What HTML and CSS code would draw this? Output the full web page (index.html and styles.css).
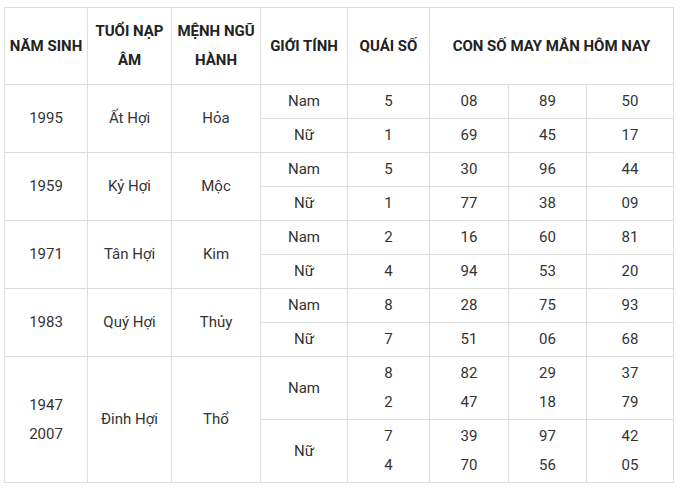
FILE: index.html
```html
<!DOCTYPE html>
<html lang="vi">
<head>
<meta charset="utf-8">
<link rel="stylesheet" href="styles.css">
</head>
<body>
<div class="wrap">
<table class="tbl">
<colgroup>
<col class="c1"><col class="c2"><col class="c3"><col class="c4"><col class="c5"><col class="c6"><col class="c7"><col class="c8">
</colgroup>
<thead>
<tr class="hrow">
<th>NĂM SINH</th><th>TUỔI NẠP ÂM</th><th>MỆNH NGŨ HÀNH</th><th>GIỚI TÍNH</th><th>QUÁI SỐ</th><th colspan="3">CON SỐ MAY MẮN HÔM NAY</th>
</tr>
</thead>
<tbody>
<tr class="r"><td rowspan="2">1995</td><td rowspan="2">Ất Hợi</td><td rowspan="2">Hỏa</td><td>Nam</td><td>5</td><td>08</td><td>89</td><td>50</td></tr>
<tr class="r"><td>Nữ</td><td>1</td><td>69</td><td>45</td><td>17</td></tr>
<tr class="r"><td rowspan="2">1959</td><td rowspan="2">Kỷ Hợi</td><td rowspan="2">Mộc</td><td>Nam</td><td>5</td><td>30</td><td>96</td><td>44</td></tr>
<tr class="r"><td>Nữ</td><td>1</td><td>77</td><td>38</td><td>09</td></tr>
<tr class="r"><td rowspan="2">1971</td><td rowspan="2">Tân Hợi</td><td rowspan="2">Kim</td><td>Nam</td><td>2</td><td>16</td><td>60</td><td>81</td></tr>
<tr class="r"><td>Nữ</td><td>4</td><td>94</td><td>53</td><td>20</td></tr>
<tr class="r"><td rowspan="2">1983</td><td rowspan="2">Quý Hợi</td><td rowspan="2">Thủy</td><td>Nam</td><td>8</td><td>28</td><td>75</td><td>93</td></tr>
<tr class="r"><td>Nữ</td><td>7</td><td>51</td><td>06</td><td>68</td></tr>
<tr class="r2"><td rowspan="2">1947<br>2007</td><td rowspan="2">Đinh Hợi</td><td rowspan="2">Thổ</td><td>Nam</td><td>8<br>2</td><td>82<br>47</td><td>29<br>18</td><td>37<br>79</td></tr>
<tr class="r2"><td>Nữ</td><td>7<br>4</td><td>39<br>70</td><td>97<br>56</td><td>42<br>05</td></tr>
</tbody>
</table>
</div>
</body>
</html>
```
FILE: styles.css
```css
html, body {
  margin: 0;
  padding: 0;
  background: #ffffff;
}
.wrap {
  padding: 7px 0 0 4px;
}
.tbl {
  border-collapse: collapse;
  table-layout: fixed;
  width: 669px;
  font-family: Roboto, "Liberation Sans", sans-serif;
  font-size: 15px;
  color: #333333;
}
.c1 { width: 83px; }
.c2 { width: 84px; }
.c3 { width: 89px; }
.c4 { width: 87px; }
.c5 { width: 82px; }
.c6 { width: 79px; }
.c7 { width: 78px; }
.c8 { width: 87px; }
.tbl th, .tbl td {
  border: 1px solid #dddddd;
  text-align: center;
  vertical-align: middle;
  padding: 0 4px;
  line-height: 29px;
}
.tbl th {
  font-weight: 700;
  color: #222222;
}
.hrow { height: 77px; }
.r { height: 34px; }
.r2 { height: 63px; }
```
